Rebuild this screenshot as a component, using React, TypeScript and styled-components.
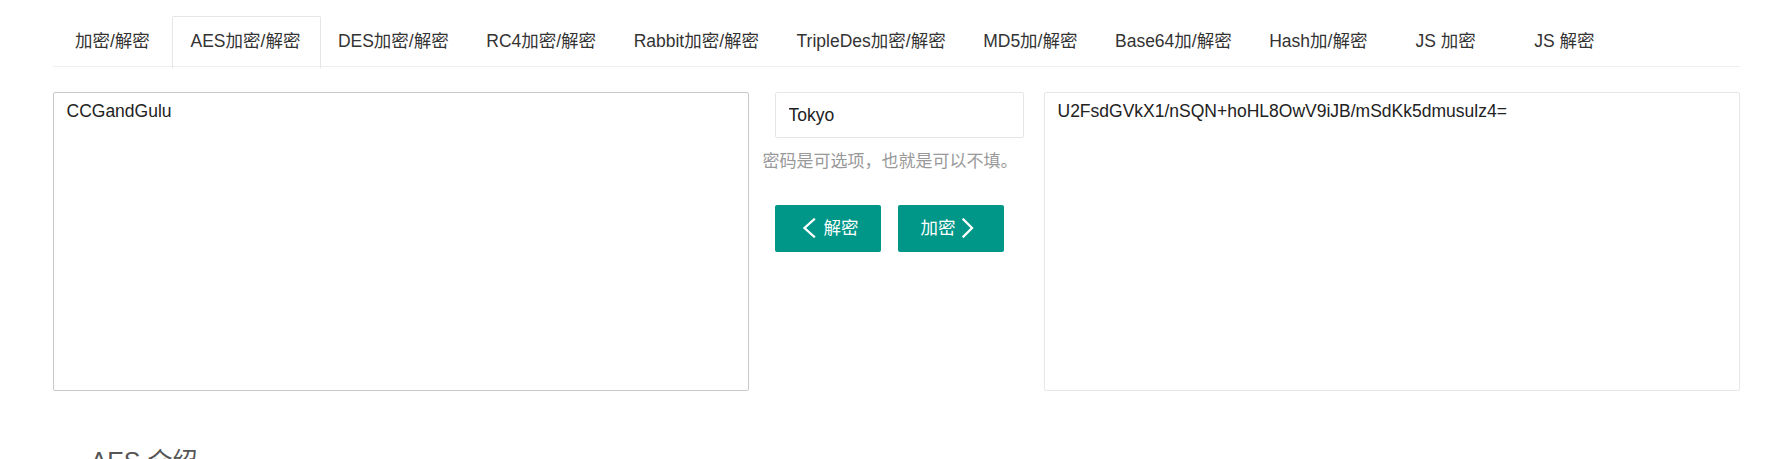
import React, { useEffect, useRef } from "react";
import styled, { createGlobalStyle } from "styled-components";

const GlobalStyle = createGlobalStyle`
  html, body {
    margin: 0;
    padding: 0;
    background: #fff;
  }
  body {
    font-family: "Liberation Sans", "Noto Sans CJK SC", sans-serif;
    color: #333;
    overflow: hidden;
  }
  * {
    box-sizing: border-box;
  }
`;

const Page = styled.div`
  width: 1740px;
  padding: 16px 0 0 53px;
`;

const TabBar = styled.ul`
  display: flex;
  margin: 0;
  padding: 0;
  list-style: none;
  height: 51px;
  border-bottom: 1px solid #eee;
`;

const Tab = styled.li<{ $active?: boolean }>`
  position: relative;
  flex: none;
  min-width: 118.75px;
  padding: 0 18.75px;
  line-height: 50px;
  height: 50px;
  font-size: 17.5px;
  text-align: center;
  white-space: nowrap;
  color: #333;
  cursor: pointer;

  ${(p) =>
    p.$active &&
    `
    &::after {
      content: "";
      position: absolute;
      left: 0;
      top: 0;
      width: 100%;
      height: 51px;
      border: 1px solid #e6e6e6;
      border-bottom-color: #fff;
      border-radius: 2px 2px 0 0;
      pointer-events: none;
    }
  `}
`;

const Workspace = styled.div`
  display: grid;
  grid-template-columns: 696px 1fr 696px;
  margin-top: 25px;
  height: 299px;
`;

const TextBox = styled.textarea<{ $focused?: boolean }>`
  display: block;
  width: 100%;
  height: 299px;
  margin: 0;
  padding: 6px 12.5px;
  border: 1px solid ${(p) => (p.$focused ? "#c9c9c9" : "#e6e6e6")};
  border-radius: 2px;
  font-family: "Liberation Sans", "Noto Sans CJK SC", sans-serif;
  font-size: 17.5px;
  line-height: 25px;
  color: #222;
  background: #fff;
  resize: none;
  outline: none;
  caret-color: #000;
`;

const Middle = styled.div`
  display: flex;
  flex-direction: column;
  align-items: flex-start;
`;

const PasswordInput = styled.input`
  margin: 0 0 0 26px;
  width: 249px;
  height: 46px;
  padding: 0 12.5px;
  border: 1px solid #e6e6e6;
  border-radius: 2px;
  font-family: "Liberation Sans", "Noto Sans CJK SC", sans-serif;
  font-size: 17.5px;
  color: #222;
  outline: none;
`;

const Hint = styled.div`
  margin: 11px 0 0 13.5px;
  font-size: 17px;
  line-height: 25px;
  color: #999;
  white-space: nowrap;
`;

const ButtonRow = styled.div`
  display: flex;
  gap: 17.3px;
  margin: 30.5px 0 0 26px;
`;

const ActionButton = styled.button`
  display: inline-flex;
  align-items: center;
  gap: 6px;
  width: 105.7px;
  height: 47.7px;
  padding: 0 22.5px;
  border: none;
  border-radius: 2px;
  background: #009688;
  color: #fff;
  font-family: "Liberation Sans", "Noto Sans CJK SC", sans-serif;
  font-size: 17.5px;
  line-height: 1;
  white-space: nowrap;
  cursor: pointer;

  svg {
    flex: none;
  }
`;

const Intro = styled.fieldset`
  margin: 58px 0 0 0;
  padding: 0;
  border: none;
  border-top: 1px solid #eee;
`;

const IntroTitle = styled.legend`
  margin-left: 25px;
  padding: 0 12.5px;
  font-size: 25px;
  line-height: 25px;
  color: #555;
`;

const ChevronLeft = () => (
  <svg width="20" height="20" viewBox="0 0 20 20" fill="none">
    <polyline points="16,1.5 6.5,10 16,18.5" stroke="#fff" strokeWidth="2.3" strokeLinecap="square" strokeLinejoin="miter" />
  </svg>
);

const ChevronRight = () => (
  <svg width="20" height="20" viewBox="0 0 20 20" fill="none">
    <polyline points="2.5,1.5 11,10 2.5,18.5" stroke="#fff" strokeWidth="2.3" strokeLinecap="square" strokeLinejoin="miter" />
  </svg>
);

const tabs = [
  "加密/解密",
  "AES加密/解密",
  "DES加密/解密",
  "RC4加密/解密",
  "Rabbit加密/解密",
  "TripleDes加密/解密",
  "MD5加/解密",
  "Base64加/解密",
  "Hash加/解密",
  "JS 加密",
  "JS 解密",
];

export default function App() {
  const sourceRef = useRef<HTMLTextAreaElement>(null);

  useEffect(() => {
    const el = sourceRef.current;
    if (el) {
      el.focus();
      el.setSelectionRange(5, 5);
    }
  }, []);

  return (
    <>
      <GlobalStyle />
      <Page>
        <TabBar>
          {tabs.map((t, i) => (
            <Tab key={t} $active={i === 1}>
              {t}
            </Tab>
          ))}
        </TabBar>
        <Workspace>
          <TextBox ref={sourceRef} $focused defaultValue="CCGandGulu" spellCheck={false} />
          <Middle>
            <PasswordInput defaultValue="Tokyo" spellCheck={false} />
            <Hint>密码是可选项，也就是可以不填。</Hint>
            <ButtonRow>
              <ActionButton>
                <ChevronLeft />
                解密
              </ActionButton>
              <ActionButton>
                加密
                <ChevronRight />
              </ActionButton>
            </ButtonRow>
          </Middle>
          <TextBox defaultValue="U2FsdGVkX1/nSQN+hoHL8OwV9iJB/mSdKk5dmusulz4=" spellCheck={false} />
        </Workspace>
        <Intro>
          <IntroTitle>AES 介绍</IntroTitle>
        </Intro>
      </Page>
    </>
  );
}
